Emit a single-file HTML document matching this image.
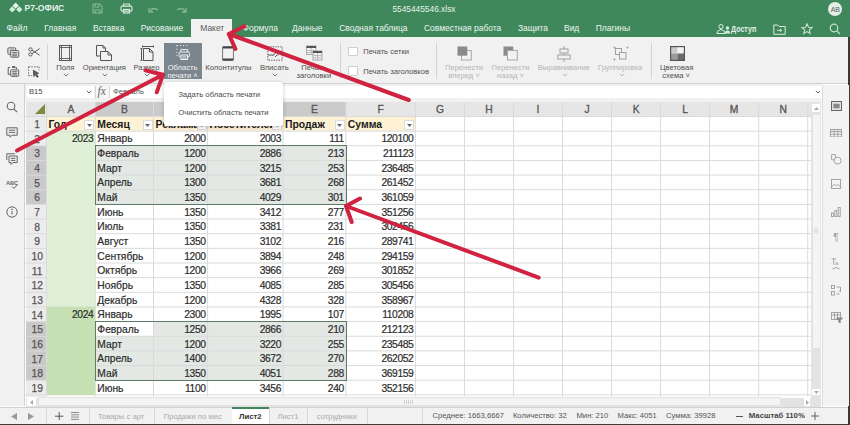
<!DOCTYPE html><html><head><meta charset="utf-8"><style>
*{margin:0;padding:0;box-sizing:border-box}
html,body{width:850px;height:425px;overflow:hidden;background:#fff;font-family:"Liberation Sans", sans-serif}
.a{position:absolute}
.t{position:absolute;white-space:nowrap;line-height:1}
</style></head><body>
<div class="a" style="left:0px;top:0px;width:850px;height:37px;background:#3e885b;"></div>
<svg class="a" style="left:0;top:0" width="30" height="16"><path d="M15.7 2.6L18.8 5.7L15.7 8.8L12.6 5.7Z" fill="#e8f5ec"/><path d="M12.2 6.300000000000001L15.299999999999999 9.4L12.2 12.5L9.1 9.4Z" fill="#cfeedb"/><path d="M19.3 6.300000000000001L22.400000000000002 9.4L19.3 12.5L16.2 9.4Z" fill="#cfeedb"/></svg>
<div class="t" style="left:24.5px;top:4.2px;font-size:8.6px;color:#e6f1ea;font-weight:bold;">Р7-ОФИС</div>
<svg class="a" style="left:92px;top:3px" width="11" height="11" viewBox="0 0 11 11" fill="none" stroke="#8fbfa0" stroke-width="1">
<path d="M1 1h7l2 2v7H1z"/><path d="M3 1v3h4V1"/><path d="M3 10V7h5v3"/></svg>
<svg class="a" style="left:119.5px;top:3px" width="13" height="11" viewBox="0 0 13 11" fill="none" stroke="#d6e9dd" stroke-width="1.2">
<path d="M3.5 3V1h6v2"/><rect x="1" y="3.2" width="11" height="5" rx="1.5"/><rect x="3.5" y="6.5" width="6" height="3.5"/></svg>
<svg class="a" style="left:148px;top:6px" width="11" height="7" viewBox="0 0 11 7" fill="none" stroke="#86b896" stroke-width="1.3">
<path d="M1.5 5.5 Q5 0.5 10 4"/><path d="M1 2v4h4"/></svg>
<svg class="a" style="left:176px;top:6px" width="11" height="7" viewBox="0 0 11 7" fill="none" stroke="#86b896" stroke-width="1.3">
<path d="M9.5 5.5 Q6 0.5 1 4"/><path d="M10 2v4H6"/></svg>
<div class="t" style="left:392.4px;top:4.6px;font-size:8.35px;color:#e6f1ea;font-weight:normal;">5545445546.xlsx</div>
<div class="a" style="left:828.2px;top:1.8px;width:14.2px;height:14.2px;border-radius:50%;background:#e3efe7"></div>
<div class="t" style="left:735.3px;width:200px;text-align:center;top:5.5px;font-size:7px;color:#5a5a5a;font-weight:normal;">AB</div>
<div class="a" style="left:191px;top:19px;width:41px;height:18.5px;background:#f1f1f1;"></div>
<div class="t" style="left:6.6px;top:23.6px;font-size:8.45px;color:#eef5f0;font-weight:normal;">Файл</div>
<div class="t" style="left:44.2px;top:23.6px;font-size:8.45px;color:#eef5f0;font-weight:normal;">Главная</div>
<div class="t" style="left:93px;top:23.6px;font-size:8.45px;color:#eef5f0;font-weight:normal;">Вставка</div>
<div class="t" style="left:140.7px;top:23.6px;font-size:8.45px;color:#eef5f0;font-weight:normal;">Рисование</div>
<div class="t" style="left:200.3px;top:23.6px;font-size:8.45px;color:#5a5a5a;font-weight:normal;">Макет</div>
<div class="t" style="left:242.6px;top:23.6px;font-size:8.45px;color:#eef5f0;font-weight:normal;">Формула</div>
<div class="t" style="left:292px;top:23.6px;font-size:8.45px;color:#eef5f0;font-weight:normal;">Данные</div>
<div class="t" style="left:339.2px;top:23.6px;font-size:8.45px;color:#eef5f0;font-weight:normal;">Сводная таблица</div>
<div class="t" style="left:424px;top:23.6px;font-size:8.45px;color:#eef5f0;font-weight:normal;">Совместная работа</div>
<div class="t" style="left:518px;top:23.6px;font-size:8.45px;color:#eef5f0;font-weight:normal;">Защита</div>
<div class="t" style="left:564px;top:23.6px;font-size:8.45px;color:#eef5f0;font-weight:normal;">Вид</div>
<div class="t" style="left:595.8px;top:23.6px;font-size:8.45px;color:#eef5f0;font-weight:normal;">Плагины</div>
<svg class="a" style="left:716px;top:23.5px" width="14" height="10" viewBox="0 0 14 10" fill="none" stroke="#dcebe1" stroke-width="1">
<circle cx="5" cy="2.6" r="2.1"/><path d="M0.8 9.5 Q1.5 5.6 5 5.6 Q8.5 5.6 9.2 9.5z"/></svg>
<svg class="a" style="left:724px;top:26px" width="7" height="8" viewBox="0 0 7 8"><circle cx="3.5" cy="2" r="1.7" fill="#dcebe1"/><path d="M0.5 7.6 Q1 4.6 3.5 4.6 Q6 4.6 6.5 7.6z" fill="#dcebe1"/></svg>
<div class="t" style="left:731.3px;top:24.6px;font-size:8.4px;color:#e6f1ea;font-weight:bold;transform:scaleX(0.85);transform-origin:0 0">Доступ</div>
<svg class="a" style="left:772.5px;top:23.5px" width="13" height="11" viewBox="0 0 13 11" fill="none" stroke="#dcebe1" stroke-width="1">
<path d="M0.8 1h4l1.2 1.5h6.2v7.8H0.8z"/><path d="M4 6.3h4.5M7 4.8l1.6 1.5L7 7.8"/></svg>
<svg class="a" style="left:801px;top:22.5px" width="12" height="12" viewBox="0 0 12 12" fill="none" stroke="#c8e4d1" stroke-width="1.1">
<path d="M6 0.8l1.5 3.4 3.6.3-2.8 2.4.9 3.6L6 8.6 2.8 10.5l.9-3.6L.9 4.5l3.6-.3z"/></svg>
<svg class="a" style="left:829px;top:22.5px" width="12" height="12" viewBox="0 0 12 12" fill="none" stroke="#c8e4d1" stroke-width="1.2">
<circle cx="5" cy="5" r="3.8"/><path d="M7.8 7.8L11 11"/></svg>
<div class="a" style="left:0px;top:37px;width:848.4px;height:47.4px;background:#f1f1f1;border-bottom:1px solid #d2d2d2"></div>
<div class="a" style="left:848.4px;top:37px;width:1.6px;height:388px;background:#3a3a3a;"></div>
<svg class="a" style="left:6.5px;top:46.5px" width="13" height="11" viewBox="0 0 13 11" fill="none" stroke="#5a5a5a" stroke-width="1">
<rect x="0.9" y="0.9" width="7.8" height="6.4" rx="0.8"/><path d="M2.5 3h4.5M2.5 5h2" stroke="#777"/><rect x="3.7" y="3.6" width="8" height="6.6" rx="0.8" fill="#f1f1f1"/><path d="M5.2 5.6h5M5.2 7.2h5M5.2 8.8h5" stroke="#666"/></svg>
<svg class="a" style="left:27.5px;top:46.5px" width="12" height="10" viewBox="0 0 12 10" fill="none" stroke="#5a5a5a" stroke-width="1">
<ellipse cx="2.5" cy="2.4" rx="1.7" ry="1.6"/><ellipse cx="2.5" cy="7.4" rx="1.7" ry="1.6"/><path d="M4 3.2L11.6 8.2M4 6.6L11.6 1.6"/></svg>
<svg class="a" style="left:6.5px;top:65.8px" width="13" height="11" viewBox="0 0 13 11" fill="none" stroke="#5a5a5a" stroke-width="1">
<path d="M3 1.5H1.2v6.8h2"/><path d="M5 1h3.2" stroke-width="1.8"/><path d="M8.4 1.5h1v1.5"/><rect x="3.7" y="3.8" width="8" height="6.5" rx="0.8" fill="#f1f1f1"/><path d="M5.2 5.7h5M5.2 7.3h5M5.2 8.9h5" stroke="#666"/></svg>
<svg class="a" style="left:28px;top:65.5px" width="12" height="12.5" viewBox="0 0 12 12.5" fill="none" stroke="#5a5a5a" stroke-width="1">
<path d="M0.6 0.8h10.5M0.6 0.8v8.8M11.1 0.8v3.5M0.6 9.6h3.5" stroke-dasharray="1.3 1.4"/><path d="M5.3 4.2l5.4 3.2-2.3.6 1.9 2.6-1 .8-1.9-2.6-1.5 1.7z" fill="#5a5a5a"/></svg>
<div class="a" style="left:47.2px;top:43.6px;width:1px;height:36px;background:#d4d4d4;"></div>
<svg class="a" style="left:0;top:0" width="200" height="80" fill="none" stroke="#555" stroke-width="1">
<rect x="59.5" y="45.5" width="12" height="15"/><path d="M61.5 45.5v15M69.5 45.5v15M59.5 47.5h12M59.5 58.5h12" stroke="#666"/></svg>
<div class="t" style="left:-34.7px;width:200px;text-align:center;top:64.2px;font-size:7.6px;color:#505050;font-weight:normal;">Поля</div>
<svg class="a" style="left:63px;top:73px" width="6" height="4" viewBox="0 0 6 4" fill="none" stroke="#777" stroke-width="1"><path d="M0.8 0.8L3 3 5.2 0.8"/></svg>
<svg class="a" style="left:0;top:0" width="200" height="80" fill="none" stroke="#555" stroke-width="1">
<path d="M96.5 45.5h6.5l2.5 2.5v3.5M96.5 45.5v10.5h3.5"/><path d="M103 45.5v2.5h2.5"/><path d="M100.5 51.5h7.5l3.5 3.5v5.5h-11z" fill="#f1f1f1"/><path d="M108 51.5v3.5h3.5"/></svg>
<div class="t" style="left:4.299999999999997px;width:200px;text-align:center;top:64.2px;font-size:7.6px;color:#505050;font-weight:normal;">Ориентация</div>
<svg class="a" style="left:101.5px;top:73px" width="6" height="4" viewBox="0 0 6 4" fill="none" stroke="#777" stroke-width="1"><path d="M0.8 0.8L3 3 5.2 0.8"/></svg>
<svg class="a" style="left:0;top:0" width="200" height="80" fill="none" stroke="#555" stroke-width="1">
<path d="M143 46.5h10M142.5 45.5v2M153.5 45.5v2M141.5 48.5v12M140.5 48.5h2M140.5 60.5h2"/><path d="M143.5 48.5h6l3.5 3.5v8.5h-9.5z"/><path d="M149.5 48.5v3.5h3.5"/></svg>
<div class="t" style="left:46.5px;width:200px;text-align:center;top:64.2px;font-size:7.6px;color:#505050;font-weight:normal;">Размер</div>
<svg class="a" style="left:144px;top:73px" width="6" height="4" viewBox="0 0 6 4" fill="none" stroke="#777" stroke-width="1"><path d="M0.8 0.8L3 3 5.2 0.8"/></svg>
<div class="a" style="left:163.5px;top:43px;width:38.3px;height:36px;background:#7b858d;"></div>
<svg class="a" style="left:175px;top:44px" width="16" height="17" viewBox="0 0 16 17" fill="none" stroke="#eef0f2" stroke-width="1">
<path d="M1.8 1.5v11M1.8 1.5h11" stroke-dasharray="1 2.2"/><path d="M5.8 8V5.6h7v2.4"/><rect x="4" y="8" width="10.5" height="5" rx="1.5"/><rect x="6" y="11" width="6.5" height="4.5" fill="#7b858d"/><path d="M7.2 12.8h4.2M7.2 14.3h4.2" stroke-width="0.8"/></svg>
<div class="t" style="left:82.6px;width:200px;text-align:center;top:64.2px;font-size:7.6px;color:#f3f4f5;font-weight:normal;">Область</div>
<div class="t" style="left:82.6px;width:200px;text-align:center;top:71.8px;font-size:7.6px;color:#f3f4f5;font-weight:normal;">печати ˄</div>
<svg class="a" style="left:222.3px;top:45.8px" width="12" height="15" viewBox="0 0 12 15" fill="none" stroke="#555" stroke-width="1">
<rect x="0.6" y="0.6" width="10.8" height="13.8" rx="0.8" stroke="#777"/><path d="M0.6 1.6h10.8M0.6 13.4h10.8" stroke-width="2" stroke="#444"/></svg>
<div class="t" style="left:128.4px;width:200px;text-align:center;top:64.2px;font-size:7.6px;color:#505050;font-weight:normal;">Колонтитулы</div>
<svg class="a" style="left:266.5px;top:45.5px" width="16" height="15" viewBox="0 0 16 15" fill="none" stroke="#555" stroke-width="1">
<rect x="0.8" y="0.8" width="14.4" height="13.4" stroke-dasharray="1.3 1.2"/><path d="M0.8 9h6M6 4.5h5v5" /><path d="M6 9.5L11 4.5M8 11l2-2"/></svg>
<div class="t" style="left:174.3px;width:200px;text-align:center;top:64.2px;font-size:7.6px;color:#505050;font-weight:normal;">Вписать</div>
<svg class="a" style="left:271.8px;top:73px" width="6" height="4" viewBox="0 0 6 4" fill="none" stroke="#777" stroke-width="1"><path d="M0.8 0.8L3 3 5.2 0.8"/></svg>
<svg class="a" style="left:0;top:0" width="340" height="80" fill="none" stroke-width="1">
<rect x="306.5" y="46" width="9.5" height="8.5" stroke="#aaa"/><path d="M306.5 47h9.5" stroke="#555" stroke-width="2"/><path d="M306.5 50.5h9.5M306.5 52.5h9.5M311.2 48v6.5" stroke="#bbb"/>
<rect x="313" y="51" width="9" height="9" fill="#f1f1f1" stroke="#aaa"/><path d="M313 52h9" stroke="#555" stroke-width="2"/><path d="M313 55.5h9M313 57.7h9M317.5 53v7" stroke="#bbb"/></svg>
<div class="t" style="left:213.8px;width:200px;text-align:center;top:64.2px;font-size:7.6px;color:#505050;font-weight:normal;">Печать</div>
<div class="t" style="left:213.8px;width:200px;text-align:center;top:71.8px;font-size:7.6px;color:#505050;font-weight:normal;">заголовки</div>
<div class="a" style="left:340.2px;top:43px;width:1px;height:35.5px;background:#d4d4d4;"></div>
<div class="a" style="left:348.4px;top:47.3px;width:9.2px;height:9.2px;background:#fff;border:1px solid #cfcfcf;border-radius:1px"></div>
<div class="a" style="left:348.4px;top:66.4px;width:9.2px;height:9.2px;background:#fff;border:1px solid #cfcfcf;border-radius:1px"></div>
<div class="t" style="left:363.2px;top:48.0px;font-size:7.6px;color:#505050;font-weight:normal;">Печать сетки</div>
<div class="t" style="left:363.2px;top:67.5px;font-size:7.6px;color:#505050;font-weight:normal;">Печать заголовков</div>
<div class="a" style="left:436.2px;top:43px;width:1px;height:35.5px;background:#d4d4d4;"></div>
<svg class="a" style="left:457px;top:45.5px" width="15" height="15" viewBox="0 0 15 15">
<rect x="4.5" y="4.5" width="9.8" height="9.5" fill="none" stroke="#a8a8a8" stroke-width="1"/><rect x="0.5" y="0.5" width="9.8" height="9.2" fill="#8a8a8a"/></svg>
<div class="t" style="left:364px;width:200px;text-align:center;top:64px;font-size:7.6px;color:#b5b5b5;font-weight:normal;">Перенести</div>
<div class="t" style="left:364px;width:200px;text-align:center;top:71.6px;font-size:7.6px;color:#b5b5b5;font-weight:normal;">вперед ˅</div>
<svg class="a" style="left:503px;top:45.5px" width="15" height="15" viewBox="0 0 15 15">
<rect x="0.5" y="0.5" width="9.8" height="9.2" fill="#8a8a8a"/><rect x="4.5" y="4.5" width="9.8" height="9.5" fill="#f1f1f1" stroke="#a8a8a8" stroke-width="1"/></svg>
<div class="t" style="left:410.5px;width:200px;text-align:center;top:64px;font-size:7.6px;color:#b5b5b5;font-weight:normal;">Перенести</div>
<div class="t" style="left:410.5px;width:200px;text-align:center;top:71.6px;font-size:7.6px;color:#b5b5b5;font-weight:normal;">назад ˅</div>
<svg class="a" style="left:557px;top:45.5px" width="14" height="16" viewBox="0 0 14 16" fill="none" stroke="#a0a0a0" stroke-width="1">
<path d="M7 0v16"/><rect x="3" y="3" width="8" height="4" fill="#f1f1f1"/><rect x="0.8" y="9" width="12.4" height="4" fill="#f1f1f1"/></svg>
<div class="t" style="left:463.79999999999995px;width:200px;text-align:center;top:64px;font-size:7.6px;color:#b5b5b5;font-weight:normal;">Выравнивание</div>
<svg class="a" style="left:561.5px;top:73px" width="6" height="4" viewBox="0 0 6 4" fill="none" stroke="#bbb" stroke-width="1"><path d="M0.8 0.8L3 3 5.2 0.8"/></svg>
<svg class="a" style="left:613px;top:45.5px" width="16" height="15" viewBox="0 0 16 15" fill="none" stroke="#a0a0a0" stroke-width="1">
<rect x="2.5" y="2.5" width="6" height="6"/><rect x="6.5" y="6.5" width="6.5" height="6.5" fill="#f1f1f1"/><circle cx="1.5" cy="1.5" r=".6" fill="#a0a0a0"/><circle cx="14.5" cy="1.5" r=".6" fill="#a0a0a0"/><circle cx="1.5" cy="13.5" r=".6" fill="#a0a0a0"/></svg>
<div class="t" style="left:520.2px;width:200px;text-align:center;top:64px;font-size:7.6px;color:#b5b5b5;font-weight:normal;">Группировка</div>
<svg class="a" style="left:618.5px;top:73px" width="6" height="4" viewBox="0 0 6 4" fill="none" stroke="#bbb" stroke-width="1"><path d="M0.8 0.8L3 3 5.2 0.8"/></svg>
<div class="a" style="left:651px;top:43px;width:1px;height:35.5px;background:#d4d4d4;"></div>
<svg class="a" style="left:669.5px;top:45.5px" width="15" height="15" viewBox="0 0 15 15">
<rect x="1" y="1" width="6.5" height="6.5" fill="#c9c9c9"/><rect x="7.5" y="1" width="6.5" height="6.5" fill="#f3f3f3"/><rect x="1" y="7.5" width="6.5" height="6.5" fill="#9b9b9b"/><rect x="7.5" y="7.5" width="6.5" height="6.5" fill="#6b6b6b"/><rect x="0.6" y="0.6" width="13.8" height="13.8" fill="none" stroke="#555" stroke-width="1.2"/></svg>
<div class="t" style="left:576.6px;width:200px;text-align:center;top:64px;font-size:7.6px;color:#505050;font-weight:normal;">Цветовая</div>
<div class="t" style="left:576.2px;width:200px;text-align:center;top:71.6px;font-size:7.6px;color:#505050;font-weight:normal;">схема ˅</div>
<div class="a" style="left:0px;top:84.4px;width:25.2px;height:322px;background:#f1f1f1;border-right:1px solid #d0d0d0"></div>
<svg class="a" style="left:6px;top:100.5px" width="12" height="12" viewBox="0 0 12 12" fill="none" stroke="#666" stroke-width="1.1"><circle cx="5" cy="5" r="3.8"/><path d="M7.8 7.8L11 11"/></svg>
<svg class="a" style="left:6px;top:126.5px" width="12" height="12" viewBox="0 0 12 12" fill="none" stroke="#666" stroke-width="1"><path d="M0.8 0.8h10.4v7.4H6l-2 2v-2H0.8z"/><path d="M2.8 3.2h6.4M2.8 5.4h6.4"/></svg>
<svg class="a" style="left:6px;top:152.5px" width="12" height="12" viewBox="0 0 12 12" fill="none" stroke="#666" stroke-width="1"><path d="M0.8 7V0.8h8"/><path d="M3 3h8.2v6.5H7l-2 2v-2H3z"/><path d="M4.8 5.3h4.6M4.8 7.4h4.6"/></svg>
<svg class="a" style="left:5.5px;top:178px" width="13" height="12" viewBox="0 0 13 12"><text x="0" y="6.5" font-size="5.6" font-weight="bold" font-family="Liberation Sans" fill="#666">ABC</text><path d="M6 8.5l2 2 3.5-4" fill="none" stroke="#666" stroke-width="1"/></svg>
<svg class="a" style="left:6px;top:206px" width="12" height="12" viewBox="0 0 12 12" fill="none" stroke="#666" stroke-width="1"><circle cx="6" cy="6" r="5.2"/><path d="M6 5v3.5"/><circle cx="6" cy="3.3" r=".4" fill="#666"/></svg>
<div class="a" style="left:25.2px;top:84.4px;width:796.6px;height:17.6px;background:#f1f1f1;"></div>
<div class="a" style="left:26.7px;top:86px;width:67.5px;height:12px;background:#fff;"></div>
<div class="t" style="left:29px;top:87.8px;font-size:7.6px;color:#444;font-weight:normal;">B15</div>
<svg class="a" style="left:85.5px;top:90px" width="6" height="4" viewBox="0 0 6 4" fill="none" stroke="#666" stroke-width="1"><path d="M0.8 0.8L3 3 5.2 0.8"/></svg>
<div class="a" style="left:94.7px;top:85.5px;width:15.6px;height:12.5px;background:#f8f8f8;border-left:1px solid #d6d6d6;border-right:1px solid #d6d6d6"></div>
<div class="t" style="left:97.6px;top:86.2px;font-family:'Liberation Serif',serif;font-style:italic;font-size:11.5px;color:#666">fx</div>
<div class="a" style="left:110px;top:86px;width:711.5px;height:12px;background:#fff;"></div>
<div class="t" style="left:113px;top:87.8px;font-size:7.6px;color:#555;font-weight:normal;">Февраль</div>
<svg class="a" style="left:815px;top:90px" width="6" height="4" viewBox="0 0 6 4" fill="none" stroke="#666" stroke-width="1"><path d="M0.8 0.8L3 3 5.2 0.8"/></svg>
<div class="a" style="left:25.5px;top:102.0px;width:785.8px;height:14.5px;background:#e6e6e6;"></div>
<div class="a" style="left:95.3px;top:102.0px;width:250.5px;height:14.5px;background:#cacaca;"></div>
<div class="a" style="left:25.5px;top:116.5px;width:21px;height:280.0px;background:#ececec;"></div>
<div class="a" style="left:25.5px;top:145.8px;width:21px;height:14.65px;background:#c9c9c9;"></div>
<div class="a" style="left:25.5px;top:160.45px;width:21px;height:14.65px;background:#c9c9c9;"></div>
<div class="a" style="left:25.5px;top:175.1px;width:21px;height:14.65px;background:#c9c9c9;"></div>
<div class="a" style="left:25.5px;top:189.75px;width:21px;height:14.65px;background:#c9c9c9;"></div>
<div class="a" style="left:25.5px;top:321.6px;width:21px;height:14.65px;background:#c9c9c9;"></div>
<div class="a" style="left:25.5px;top:336.25px;width:21px;height:14.65px;background:#c9c9c9;"></div>
<div class="a" style="left:25.5px;top:350.9px;width:21px;height:14.65px;background:#c9c9c9;"></div>
<div class="a" style="left:25.5px;top:365.55px;width:21px;height:14.65px;background:#c9c9c9;"></div>
<svg class="a" style="left:35px;top:104px" width="10" height="10" viewBox="0 0 10 10"><path d="M10 0V10H0z" fill="#7d8c3a"/></svg>
<div class="a" style="left:46.5px;top:116.5px;width:368.9px;height:14.65px;background:#fdf2d3;"></div>
<div class="a" style="left:46.5px;top:131.15px;width:48.8px;height:175.8px;background:#dff0d6;"></div>
<div class="a" style="left:46.5px;top:306.95000000000005px;width:48.8px;height:87.9px;background:#c5e1b3;"></div>
<div class="a" style="left:95.3px;top:145.8px;width:250.5px;height:58.6px;background:#e3e8e5;"></div>
<div class="a" style="left:95.3px;top:321.6px;width:250.5px;height:58.6px;background:#e3e8e5;"></div>
<div class="a" style="left:95.3px;top:321.6px;width:58.2px;height:14.65px;background:#fff;"></div>
<svg class="a" style="left:0;top:0" width="850" height="425"><g stroke="#dadada" stroke-width="1" fill="none"><path d="M95.3 102.0V396.5" /><path d="M153.5 102.0V396.5" /><path d="M207.6 102.0V396.5" /><path d="M283.0 102.0V396.5" /><path d="M345.8 102.0V396.5" /><path d="M415.4 102.0V396.5" /><path d="M464.44 102.0V396.5" /><path d="M513.48 102.0V396.5" /><path d="M562.52 102.0V396.5" /><path d="M611.56 102.0V396.5" /><path d="M660.5999999999999 102.0V396.5" /><path d="M709.6399999999999 102.0V396.5" /><path d="M758.6799999999998 102.0V396.5" /><path d="M807.7199999999998 102.0V396.5" /><path d="M46.5 102.0V396.5" /><path d="M25.5 116.5H811.3" /><path d="M25.5 131.15H811.3" /><path d="M25.5 145.8H811.3" /><path d="M25.5 160.45H811.3" /><path d="M25.5 175.1H811.3" /><path d="M25.5 189.75H811.3" /><path d="M25.5 204.4H811.3" /><path d="M25.5 219.05H811.3" /><path d="M25.5 233.7H811.3" /><path d="M25.5 248.35H811.3" /><path d="M25.5 263.0H811.3" /><path d="M25.5 277.65H811.3" /><path d="M25.5 292.3H811.3" /><path d="M25.5 306.95000000000005H811.3" /><path d="M25.5 321.6H811.3" /><path d="M25.5 336.25H811.3" /><path d="M25.5 350.9H811.3" /><path d="M25.5 365.55H811.3" /><path d="M25.5 380.2H811.3" /><path d="M25.5 394.85H811.3" /></g></svg>
<div class="a" style="left:47px;top:131.65px;width:47.8px;height:174.8px;background:#dff0d6;"></div>
<div class="a" style="left:47px;top:307.45000000000005px;width:47.8px;height:87.4px;background:#c5e1b3;"></div>
<div class="t" style="left:-29.099999999999994px;width:200px;text-align:center;top:105.3px;font-size:10.3px;color:#555;font-weight:normal;-webkit-text-stroke:0.3px #555">A</div>
<div class="t" style="left:24.400000000000006px;width:200px;text-align:center;top:105.3px;font-size:10.3px;color:#555;font-weight:normal;-webkit-text-stroke:0.3px #555">B</div>
<div class="t" style="left:80.55000000000001px;width:200px;text-align:center;top:105.3px;font-size:10.3px;color:#555;font-weight:normal;-webkit-text-stroke:0.3px #555">C</div>
<div class="t" style="left:145.3px;width:200px;text-align:center;top:105.3px;font-size:10.3px;color:#555;font-weight:normal;-webkit-text-stroke:0.3px #555">D</div>
<div class="t" style="left:214.39999999999998px;width:200px;text-align:center;top:105.3px;font-size:10.3px;color:#555;font-weight:normal;-webkit-text-stroke:0.3px #555">E</div>
<div class="t" style="left:280.6px;width:200px;text-align:center;top:105.3px;font-size:10.3px;color:#555;font-weight:normal;-webkit-text-stroke:0.3px #555">F</div>
<div class="t" style="left:339.91999999999996px;width:200px;text-align:center;top:105.3px;font-size:10.3px;color:#555;font-weight:normal;-webkit-text-stroke:0.3px #555">G</div>
<div class="t" style="left:388.96000000000004px;width:200px;text-align:center;top:105.3px;font-size:10.3px;color:#555;font-weight:normal;-webkit-text-stroke:0.3px #555">H</div>
<div class="t" style="left:438.0px;width:200px;text-align:center;top:105.3px;font-size:10.3px;color:#555;font-weight:normal;-webkit-text-stroke:0.3px #555">I</div>
<div class="t" style="left:487.03999999999996px;width:200px;text-align:center;top:105.3px;font-size:10.3px;color:#555;font-weight:normal;-webkit-text-stroke:0.3px #555">J</div>
<div class="t" style="left:536.0799999999999px;width:200px;text-align:center;top:105.3px;font-size:10.3px;color:#555;font-weight:normal;-webkit-text-stroke:0.3px #555">K</div>
<div class="t" style="left:585.1199999999999px;width:200px;text-align:center;top:105.3px;font-size:10.3px;color:#555;font-weight:normal;-webkit-text-stroke:0.3px #555">L</div>
<div class="t" style="left:634.1599999999999px;width:200px;text-align:center;top:105.3px;font-size:10.3px;color:#555;font-weight:normal;-webkit-text-stroke:0.3px #555">M</div>
<div class="t" style="left:683.1999999999998px;width:200px;text-align:center;top:105.3px;font-size:10.3px;color:#555;font-weight:normal;-webkit-text-stroke:0.3px #555">N</div>
<div class="t" style="left:-62.8px;width:200px;text-align:center;top:120.1px;font-size:10.3px;color:#555;font-weight:normal;-webkit-text-stroke:0.25px #555">1</div>
<div class="t" style="left:-62.8px;width:200px;text-align:center;top:134.75px;font-size:10.3px;color:#555;font-weight:normal;-webkit-text-stroke:0.25px #555">2</div>
<div class="t" style="left:-62.8px;width:200px;text-align:center;top:149.4px;font-size:10.3px;color:#555;font-weight:normal;-webkit-text-stroke:0.25px #555">3</div>
<div class="t" style="left:-62.8px;width:200px;text-align:center;top:164.04999999999998px;font-size:10.3px;color:#555;font-weight:normal;-webkit-text-stroke:0.25px #555">4</div>
<div class="t" style="left:-62.8px;width:200px;text-align:center;top:178.7px;font-size:10.3px;color:#555;font-weight:normal;-webkit-text-stroke:0.25px #555">5</div>
<div class="t" style="left:-62.8px;width:200px;text-align:center;top:193.35px;font-size:10.3px;color:#555;font-weight:normal;-webkit-text-stroke:0.25px #555">6</div>
<div class="t" style="left:-62.8px;width:200px;text-align:center;top:208.0px;font-size:10.3px;color:#555;font-weight:normal;-webkit-text-stroke:0.25px #555">7</div>
<div class="t" style="left:-62.8px;width:200px;text-align:center;top:222.65px;font-size:10.3px;color:#555;font-weight:normal;-webkit-text-stroke:0.25px #555">8</div>
<div class="t" style="left:-62.8px;width:200px;text-align:center;top:237.29999999999998px;font-size:10.3px;color:#555;font-weight:normal;-webkit-text-stroke:0.25px #555">9</div>
<div class="t" style="left:-62.8px;width:200px;text-align:center;top:251.95px;font-size:10.3px;color:#555;font-weight:normal;-webkit-text-stroke:0.25px #555">10</div>
<div class="t" style="left:-62.8px;width:200px;text-align:center;top:266.6px;font-size:10.3px;color:#555;font-weight:normal;-webkit-text-stroke:0.25px #555">11</div>
<div class="t" style="left:-62.8px;width:200px;text-align:center;top:281.25px;font-size:10.3px;color:#555;font-weight:normal;-webkit-text-stroke:0.25px #555">12</div>
<div class="t" style="left:-62.8px;width:200px;text-align:center;top:295.90000000000003px;font-size:10.3px;color:#555;font-weight:normal;-webkit-text-stroke:0.25px #555">13</div>
<div class="t" style="left:-62.8px;width:200px;text-align:center;top:310.55000000000007px;font-size:10.3px;color:#555;font-weight:normal;-webkit-text-stroke:0.25px #555">14</div>
<div class="t" style="left:-62.8px;width:200px;text-align:center;top:325.20000000000005px;font-size:10.3px;color:#555;font-weight:normal;-webkit-text-stroke:0.25px #555">15</div>
<div class="t" style="left:-62.8px;width:200px;text-align:center;top:339.85px;font-size:10.3px;color:#555;font-weight:normal;-webkit-text-stroke:0.25px #555">16</div>
<div class="t" style="left:-62.8px;width:200px;text-align:center;top:354.5px;font-size:10.3px;color:#555;font-weight:normal;-webkit-text-stroke:0.25px #555">17</div>
<div class="t" style="left:-62.8px;width:200px;text-align:center;top:369.15000000000003px;font-size:10.3px;color:#555;font-weight:normal;-webkit-text-stroke:0.25px #555">18</div>
<div class="t" style="left:-62.8px;width:200px;text-align:center;top:383.8px;font-size:10.3px;color:#555;font-weight:normal;-webkit-text-stroke:0.25px #555">19</div>
<div class="t" style="left:48.5px;top:119.8px;font-size:10.4px;color:#1a1a1a;font-weight:bold;">Год</div>
<div class="t" style="left:97.3px;top:119.8px;font-size:10.4px;color:#1a1a1a;font-weight:bold;">Месяц</div>
<div class="t" style="left:155.5px;top:119.8px;font-size:10.4px;color:#1a1a1a;font-weight:bold;">Реклама</div>
<div class="t" style="left:209.6px;top:119.8px;font-size:10.4px;color:#1a1a1a;font-weight:bold;">Посетителей</div>
<div class="t" style="left:285.0px;top:119.8px;font-size:10.4px;color:#1a1a1a;font-weight:bold;">Продаж</div>
<div class="t" style="left:347.8px;top:119.8px;font-size:10.4px;color:#1a1a1a;font-weight:bold;">Сумма</div>
<div class="t" style="left:-106.7px;width:200px;text-align:right;top:134.45000000000002px;font-size:10.3px;color:#2a2a2a;font-weight:normal;letter-spacing:-0.4px;-webkit-text-stroke:0.2px #333">2023</div>
<div class="t" style="left:97.3px;top:134.45000000000002px;font-size:10.3px;color:#2a2a2a;font-weight:normal;-webkit-text-stroke:0.2px #333">Январь</div>
<div class="t" style="left:5.599999999999994px;width:200px;text-align:right;top:134.45000000000002px;font-size:10.3px;color:#2a2a2a;font-weight:normal;letter-spacing:-0.4px;-webkit-text-stroke:0.2px #333">2000</div>
<div class="t" style="left:81.0px;width:200px;text-align:right;top:134.45000000000002px;font-size:10.3px;color:#2a2a2a;font-weight:normal;letter-spacing:-0.4px;-webkit-text-stroke:0.2px #333">2003</div>
<div class="t" style="left:143.8px;width:200px;text-align:right;top:134.45000000000002px;font-size:10.3px;color:#2a2a2a;font-weight:normal;letter-spacing:-0.4px;-webkit-text-stroke:0.2px #333">111</div>
<div class="t" style="left:213.39999999999998px;width:200px;text-align:right;top:134.45000000000002px;font-size:10.3px;color:#2a2a2a;font-weight:normal;letter-spacing:-0.4px;-webkit-text-stroke:0.2px #333">120100</div>
<div class="t" style="left:97.3px;top:149.10000000000002px;font-size:10.3px;color:#2a2a2a;font-weight:normal;-webkit-text-stroke:0.2px #333">Февраль</div>
<div class="t" style="left:5.599999999999994px;width:200px;text-align:right;top:149.10000000000002px;font-size:10.3px;color:#2a2a2a;font-weight:normal;letter-spacing:-0.4px;-webkit-text-stroke:0.2px #333">1200</div>
<div class="t" style="left:81.0px;width:200px;text-align:right;top:149.10000000000002px;font-size:10.3px;color:#2a2a2a;font-weight:normal;letter-spacing:-0.4px;-webkit-text-stroke:0.2px #333">2886</div>
<div class="t" style="left:143.8px;width:200px;text-align:right;top:149.10000000000002px;font-size:10.3px;color:#2a2a2a;font-weight:normal;letter-spacing:-0.4px;-webkit-text-stroke:0.2px #333">213</div>
<div class="t" style="left:213.39999999999998px;width:200px;text-align:right;top:149.10000000000002px;font-size:10.3px;color:#2a2a2a;font-weight:normal;letter-spacing:-0.4px;-webkit-text-stroke:0.2px #333">211123</div>
<div class="t" style="left:97.3px;top:163.75px;font-size:10.3px;color:#2a2a2a;font-weight:normal;-webkit-text-stroke:0.2px #333">Март</div>
<div class="t" style="left:5.599999999999994px;width:200px;text-align:right;top:163.75px;font-size:10.3px;color:#2a2a2a;font-weight:normal;letter-spacing:-0.4px;-webkit-text-stroke:0.2px #333">1200</div>
<div class="t" style="left:81.0px;width:200px;text-align:right;top:163.75px;font-size:10.3px;color:#2a2a2a;font-weight:normal;letter-spacing:-0.4px;-webkit-text-stroke:0.2px #333">3215</div>
<div class="t" style="left:143.8px;width:200px;text-align:right;top:163.75px;font-size:10.3px;color:#2a2a2a;font-weight:normal;letter-spacing:-0.4px;-webkit-text-stroke:0.2px #333">253</div>
<div class="t" style="left:213.39999999999998px;width:200px;text-align:right;top:163.75px;font-size:10.3px;color:#2a2a2a;font-weight:normal;letter-spacing:-0.4px;-webkit-text-stroke:0.2px #333">236485</div>
<div class="t" style="left:97.3px;top:178.4px;font-size:10.3px;color:#2a2a2a;font-weight:normal;-webkit-text-stroke:0.2px #333">Апрель</div>
<div class="t" style="left:5.599999999999994px;width:200px;text-align:right;top:178.4px;font-size:10.3px;color:#2a2a2a;font-weight:normal;letter-spacing:-0.4px;-webkit-text-stroke:0.2px #333">1300</div>
<div class="t" style="left:81.0px;width:200px;text-align:right;top:178.4px;font-size:10.3px;color:#2a2a2a;font-weight:normal;letter-spacing:-0.4px;-webkit-text-stroke:0.2px #333">3681</div>
<div class="t" style="left:143.8px;width:200px;text-align:right;top:178.4px;font-size:10.3px;color:#2a2a2a;font-weight:normal;letter-spacing:-0.4px;-webkit-text-stroke:0.2px #333">268</div>
<div class="t" style="left:213.39999999999998px;width:200px;text-align:right;top:178.4px;font-size:10.3px;color:#2a2a2a;font-weight:normal;letter-spacing:-0.4px;-webkit-text-stroke:0.2px #333">261452</div>
<div class="t" style="left:97.3px;top:193.05px;font-size:10.3px;color:#2a2a2a;font-weight:normal;-webkit-text-stroke:0.2px #333">Май</div>
<div class="t" style="left:5.599999999999994px;width:200px;text-align:right;top:193.05px;font-size:10.3px;color:#2a2a2a;font-weight:normal;letter-spacing:-0.4px;-webkit-text-stroke:0.2px #333">1350</div>
<div class="t" style="left:81.0px;width:200px;text-align:right;top:193.05px;font-size:10.3px;color:#2a2a2a;font-weight:normal;letter-spacing:-0.4px;-webkit-text-stroke:0.2px #333">4029</div>
<div class="t" style="left:143.8px;width:200px;text-align:right;top:193.05px;font-size:10.3px;color:#2a2a2a;font-weight:normal;letter-spacing:-0.4px;-webkit-text-stroke:0.2px #333">301</div>
<div class="t" style="left:213.39999999999998px;width:200px;text-align:right;top:193.05px;font-size:10.3px;color:#2a2a2a;font-weight:normal;letter-spacing:-0.4px;-webkit-text-stroke:0.2px #333">361059</div>
<div class="t" style="left:97.3px;top:207.70000000000002px;font-size:10.3px;color:#2a2a2a;font-weight:normal;-webkit-text-stroke:0.2px #333">Июнь</div>
<div class="t" style="left:5.599999999999994px;width:200px;text-align:right;top:207.70000000000002px;font-size:10.3px;color:#2a2a2a;font-weight:normal;letter-spacing:-0.4px;-webkit-text-stroke:0.2px #333">1350</div>
<div class="t" style="left:81.0px;width:200px;text-align:right;top:207.70000000000002px;font-size:10.3px;color:#2a2a2a;font-weight:normal;letter-spacing:-0.4px;-webkit-text-stroke:0.2px #333">3412</div>
<div class="t" style="left:143.8px;width:200px;text-align:right;top:207.70000000000002px;font-size:10.3px;color:#2a2a2a;font-weight:normal;letter-spacing:-0.4px;-webkit-text-stroke:0.2px #333">277</div>
<div class="t" style="left:213.39999999999998px;width:200px;text-align:right;top:207.70000000000002px;font-size:10.3px;color:#2a2a2a;font-weight:normal;letter-spacing:-0.4px;-webkit-text-stroke:0.2px #333">351256</div>
<div class="t" style="left:97.3px;top:222.35000000000002px;font-size:10.3px;color:#2a2a2a;font-weight:normal;-webkit-text-stroke:0.2px #333">Июль</div>
<div class="t" style="left:5.599999999999994px;width:200px;text-align:right;top:222.35000000000002px;font-size:10.3px;color:#2a2a2a;font-weight:normal;letter-spacing:-0.4px;-webkit-text-stroke:0.2px #333">1350</div>
<div class="t" style="left:81.0px;width:200px;text-align:right;top:222.35000000000002px;font-size:10.3px;color:#2a2a2a;font-weight:normal;letter-spacing:-0.4px;-webkit-text-stroke:0.2px #333">3381</div>
<div class="t" style="left:143.8px;width:200px;text-align:right;top:222.35000000000002px;font-size:10.3px;color:#2a2a2a;font-weight:normal;letter-spacing:-0.4px;-webkit-text-stroke:0.2px #333">231</div>
<div class="t" style="left:213.39999999999998px;width:200px;text-align:right;top:222.35000000000002px;font-size:10.3px;color:#2a2a2a;font-weight:normal;letter-spacing:-0.4px;-webkit-text-stroke:0.2px #333">302456</div>
<div class="t" style="left:97.3px;top:237.0px;font-size:10.3px;color:#2a2a2a;font-weight:normal;-webkit-text-stroke:0.2px #333">Август</div>
<div class="t" style="left:5.599999999999994px;width:200px;text-align:right;top:237.0px;font-size:10.3px;color:#2a2a2a;font-weight:normal;letter-spacing:-0.4px;-webkit-text-stroke:0.2px #333">1350</div>
<div class="t" style="left:81.0px;width:200px;text-align:right;top:237.0px;font-size:10.3px;color:#2a2a2a;font-weight:normal;letter-spacing:-0.4px;-webkit-text-stroke:0.2px #333">3102</div>
<div class="t" style="left:143.8px;width:200px;text-align:right;top:237.0px;font-size:10.3px;color:#2a2a2a;font-weight:normal;letter-spacing:-0.4px;-webkit-text-stroke:0.2px #333">216</div>
<div class="t" style="left:213.39999999999998px;width:200px;text-align:right;top:237.0px;font-size:10.3px;color:#2a2a2a;font-weight:normal;letter-spacing:-0.4px;-webkit-text-stroke:0.2px #333">289741</div>
<div class="t" style="left:97.3px;top:251.65px;font-size:10.3px;color:#2a2a2a;font-weight:normal;-webkit-text-stroke:0.2px #333">Сентябрь</div>
<div class="t" style="left:5.599999999999994px;width:200px;text-align:right;top:251.65px;font-size:10.3px;color:#2a2a2a;font-weight:normal;letter-spacing:-0.4px;-webkit-text-stroke:0.2px #333">1200</div>
<div class="t" style="left:81.0px;width:200px;text-align:right;top:251.65px;font-size:10.3px;color:#2a2a2a;font-weight:normal;letter-spacing:-0.4px;-webkit-text-stroke:0.2px #333">3894</div>
<div class="t" style="left:143.8px;width:200px;text-align:right;top:251.65px;font-size:10.3px;color:#2a2a2a;font-weight:normal;letter-spacing:-0.4px;-webkit-text-stroke:0.2px #333">248</div>
<div class="t" style="left:213.39999999999998px;width:200px;text-align:right;top:251.65px;font-size:10.3px;color:#2a2a2a;font-weight:normal;letter-spacing:-0.4px;-webkit-text-stroke:0.2px #333">294159</div>
<div class="t" style="left:97.3px;top:266.3px;font-size:10.3px;color:#2a2a2a;font-weight:normal;-webkit-text-stroke:0.2px #333">Октябрь</div>
<div class="t" style="left:5.599999999999994px;width:200px;text-align:right;top:266.3px;font-size:10.3px;color:#2a2a2a;font-weight:normal;letter-spacing:-0.4px;-webkit-text-stroke:0.2px #333">1200</div>
<div class="t" style="left:81.0px;width:200px;text-align:right;top:266.3px;font-size:10.3px;color:#2a2a2a;font-weight:normal;letter-spacing:-0.4px;-webkit-text-stroke:0.2px #333">3966</div>
<div class="t" style="left:143.8px;width:200px;text-align:right;top:266.3px;font-size:10.3px;color:#2a2a2a;font-weight:normal;letter-spacing:-0.4px;-webkit-text-stroke:0.2px #333">269</div>
<div class="t" style="left:213.39999999999998px;width:200px;text-align:right;top:266.3px;font-size:10.3px;color:#2a2a2a;font-weight:normal;letter-spacing:-0.4px;-webkit-text-stroke:0.2px #333">301852</div>
<div class="t" style="left:97.3px;top:280.95px;font-size:10.3px;color:#2a2a2a;font-weight:normal;-webkit-text-stroke:0.2px #333">Ноябрь</div>
<div class="t" style="left:5.599999999999994px;width:200px;text-align:right;top:280.95px;font-size:10.3px;color:#2a2a2a;font-weight:normal;letter-spacing:-0.4px;-webkit-text-stroke:0.2px #333">1350</div>
<div class="t" style="left:81.0px;width:200px;text-align:right;top:280.95px;font-size:10.3px;color:#2a2a2a;font-weight:normal;letter-spacing:-0.4px;-webkit-text-stroke:0.2px #333">4085</div>
<div class="t" style="left:143.8px;width:200px;text-align:right;top:280.95px;font-size:10.3px;color:#2a2a2a;font-weight:normal;letter-spacing:-0.4px;-webkit-text-stroke:0.2px #333">285</div>
<div class="t" style="left:213.39999999999998px;width:200px;text-align:right;top:280.95px;font-size:10.3px;color:#2a2a2a;font-weight:normal;letter-spacing:-0.4px;-webkit-text-stroke:0.2px #333">305456</div>
<div class="t" style="left:97.3px;top:295.6px;font-size:10.3px;color:#2a2a2a;font-weight:normal;-webkit-text-stroke:0.2px #333">Декабрь</div>
<div class="t" style="left:5.599999999999994px;width:200px;text-align:right;top:295.6px;font-size:10.3px;color:#2a2a2a;font-weight:normal;letter-spacing:-0.4px;-webkit-text-stroke:0.2px #333">1200</div>
<div class="t" style="left:81.0px;width:200px;text-align:right;top:295.6px;font-size:10.3px;color:#2a2a2a;font-weight:normal;letter-spacing:-0.4px;-webkit-text-stroke:0.2px #333">4328</div>
<div class="t" style="left:143.8px;width:200px;text-align:right;top:295.6px;font-size:10.3px;color:#2a2a2a;font-weight:normal;letter-spacing:-0.4px;-webkit-text-stroke:0.2px #333">328</div>
<div class="t" style="left:213.39999999999998px;width:200px;text-align:right;top:295.6px;font-size:10.3px;color:#2a2a2a;font-weight:normal;letter-spacing:-0.4px;-webkit-text-stroke:0.2px #333">358967</div>
<div class="t" style="left:-106.7px;width:200px;text-align:right;top:310.25000000000006px;font-size:10.3px;color:#2a2a2a;font-weight:normal;letter-spacing:-0.4px;-webkit-text-stroke:0.2px #333">2024</div>
<div class="t" style="left:97.3px;top:310.25000000000006px;font-size:10.3px;color:#2a2a2a;font-weight:normal;-webkit-text-stroke:0.2px #333">Январь</div>
<div class="t" style="left:5.599999999999994px;width:200px;text-align:right;top:310.25000000000006px;font-size:10.3px;color:#2a2a2a;font-weight:normal;letter-spacing:-0.4px;-webkit-text-stroke:0.2px #333">2300</div>
<div class="t" style="left:81.0px;width:200px;text-align:right;top:310.25000000000006px;font-size:10.3px;color:#2a2a2a;font-weight:normal;letter-spacing:-0.4px;-webkit-text-stroke:0.2px #333">1995</div>
<div class="t" style="left:143.8px;width:200px;text-align:right;top:310.25000000000006px;font-size:10.3px;color:#2a2a2a;font-weight:normal;letter-spacing:-0.4px;-webkit-text-stroke:0.2px #333">107</div>
<div class="t" style="left:213.39999999999998px;width:200px;text-align:right;top:310.25000000000006px;font-size:10.3px;color:#2a2a2a;font-weight:normal;letter-spacing:-0.4px;-webkit-text-stroke:0.2px #333">110208</div>
<div class="t" style="left:97.3px;top:324.90000000000003px;font-size:10.3px;color:#2a2a2a;font-weight:normal;-webkit-text-stroke:0.2px #333">Февраль</div>
<div class="t" style="left:5.599999999999994px;width:200px;text-align:right;top:324.90000000000003px;font-size:10.3px;color:#2a2a2a;font-weight:normal;letter-spacing:-0.4px;-webkit-text-stroke:0.2px #333">1250</div>
<div class="t" style="left:81.0px;width:200px;text-align:right;top:324.90000000000003px;font-size:10.3px;color:#2a2a2a;font-weight:normal;letter-spacing:-0.4px;-webkit-text-stroke:0.2px #333">2866</div>
<div class="t" style="left:143.8px;width:200px;text-align:right;top:324.90000000000003px;font-size:10.3px;color:#2a2a2a;font-weight:normal;letter-spacing:-0.4px;-webkit-text-stroke:0.2px #333">210</div>
<div class="t" style="left:213.39999999999998px;width:200px;text-align:right;top:324.90000000000003px;font-size:10.3px;color:#2a2a2a;font-weight:normal;letter-spacing:-0.4px;-webkit-text-stroke:0.2px #333">212123</div>
<div class="t" style="left:97.3px;top:339.55px;font-size:10.3px;color:#2a2a2a;font-weight:normal;-webkit-text-stroke:0.2px #333">Март</div>
<div class="t" style="left:5.599999999999994px;width:200px;text-align:right;top:339.55px;font-size:10.3px;color:#2a2a2a;font-weight:normal;letter-spacing:-0.4px;-webkit-text-stroke:0.2px #333">1200</div>
<div class="t" style="left:81.0px;width:200px;text-align:right;top:339.55px;font-size:10.3px;color:#2a2a2a;font-weight:normal;letter-spacing:-0.4px;-webkit-text-stroke:0.2px #333">3220</div>
<div class="t" style="left:143.8px;width:200px;text-align:right;top:339.55px;font-size:10.3px;color:#2a2a2a;font-weight:normal;letter-spacing:-0.4px;-webkit-text-stroke:0.2px #333">255</div>
<div class="t" style="left:213.39999999999998px;width:200px;text-align:right;top:339.55px;font-size:10.3px;color:#2a2a2a;font-weight:normal;letter-spacing:-0.4px;-webkit-text-stroke:0.2px #333">235485</div>
<div class="t" style="left:97.3px;top:354.2px;font-size:10.3px;color:#2a2a2a;font-weight:normal;-webkit-text-stroke:0.2px #333">Апрель</div>
<div class="t" style="left:5.599999999999994px;width:200px;text-align:right;top:354.2px;font-size:10.3px;color:#2a2a2a;font-weight:normal;letter-spacing:-0.4px;-webkit-text-stroke:0.2px #333">1400</div>
<div class="t" style="left:81.0px;width:200px;text-align:right;top:354.2px;font-size:10.3px;color:#2a2a2a;font-weight:normal;letter-spacing:-0.4px;-webkit-text-stroke:0.2px #333">3672</div>
<div class="t" style="left:143.8px;width:200px;text-align:right;top:354.2px;font-size:10.3px;color:#2a2a2a;font-weight:normal;letter-spacing:-0.4px;-webkit-text-stroke:0.2px #333">270</div>
<div class="t" style="left:213.39999999999998px;width:200px;text-align:right;top:354.2px;font-size:10.3px;color:#2a2a2a;font-weight:normal;letter-spacing:-0.4px;-webkit-text-stroke:0.2px #333">262052</div>
<div class="t" style="left:97.3px;top:368.85px;font-size:10.3px;color:#2a2a2a;font-weight:normal;-webkit-text-stroke:0.2px #333">Май</div>
<div class="t" style="left:5.599999999999994px;width:200px;text-align:right;top:368.85px;font-size:10.3px;color:#2a2a2a;font-weight:normal;letter-spacing:-0.4px;-webkit-text-stroke:0.2px #333">1350</div>
<div class="t" style="left:81.0px;width:200px;text-align:right;top:368.85px;font-size:10.3px;color:#2a2a2a;font-weight:normal;letter-spacing:-0.4px;-webkit-text-stroke:0.2px #333">4051</div>
<div class="t" style="left:143.8px;width:200px;text-align:right;top:368.85px;font-size:10.3px;color:#2a2a2a;font-weight:normal;letter-spacing:-0.4px;-webkit-text-stroke:0.2px #333">288</div>
<div class="t" style="left:213.39999999999998px;width:200px;text-align:right;top:368.85px;font-size:10.3px;color:#2a2a2a;font-weight:normal;letter-spacing:-0.4px;-webkit-text-stroke:0.2px #333">369159</div>
<div class="t" style="left:97.3px;top:383.5px;font-size:10.3px;color:#2a2a2a;font-weight:normal;-webkit-text-stroke:0.2px #333">Июнь</div>
<div class="t" style="left:5.599999999999994px;width:200px;text-align:right;top:383.5px;font-size:10.3px;color:#2a2a2a;font-weight:normal;letter-spacing:-0.4px;-webkit-text-stroke:0.2px #333">1100</div>
<div class="t" style="left:81.0px;width:200px;text-align:right;top:383.5px;font-size:10.3px;color:#2a2a2a;font-weight:normal;letter-spacing:-0.4px;-webkit-text-stroke:0.2px #333">3456</div>
<div class="t" style="left:143.8px;width:200px;text-align:right;top:383.5px;font-size:10.3px;color:#2a2a2a;font-weight:normal;letter-spacing:-0.4px;-webkit-text-stroke:0.2px #333">240</div>
<div class="t" style="left:213.39999999999998px;width:200px;text-align:right;top:383.5px;font-size:10.3px;color:#2a2a2a;font-weight:normal;letter-spacing:-0.4px;-webkit-text-stroke:0.2px #333">352156</div>
<div class="a" style="left:84.3px;top:119.7px;width:10px;height:10.2px;background:#fff;border:1px solid #dcdcdc"></div>
<svg class="a" style="left:86.8px;top:123.5px" width="5" height="3" viewBox="0 0 5 3"><path d="M0 0h5L2.5 3z" fill="#666"/></svg>
<div class="a" style="left:142.5px;top:119.7px;width:10px;height:10.2px;background:#fff;border:1px solid #dcdcdc"></div>
<svg class="a" style="left:145.0px;top:123.5px" width="5" height="3" viewBox="0 0 5 3"><path d="M0 0h5L2.5 3z" fill="#666"/></svg>
<div class="a" style="left:196.6px;top:119.7px;width:10px;height:10.2px;background:#fff;border:1px solid #dcdcdc"></div>
<svg class="a" style="left:199.1px;top:123.5px" width="5" height="3" viewBox="0 0 5 3"><path d="M0 0h5L2.5 3z" fill="#666"/></svg>
<div class="a" style="left:272.0px;top:119.7px;width:10px;height:10.2px;background:#fff;border:1px solid #dcdcdc"></div>
<svg class="a" style="left:274.5px;top:123.5px" width="5" height="3" viewBox="0 0 5 3"><path d="M0 0h5L2.5 3z" fill="#666"/></svg>
<div class="a" style="left:334.8px;top:119.7px;width:10px;height:10.2px;background:#fff;border:1px solid #dcdcdc"></div>
<svg class="a" style="left:337.3px;top:123.5px" width="5" height="3" viewBox="0 0 5 3"><path d="M0 0h5L2.5 3z" fill="#666"/></svg>
<div class="a" style="left:404.4px;top:119.7px;width:10px;height:10.2px;background:#fff;border:1px solid #dcdcdc"></div>
<svg class="a" style="left:406.9px;top:123.5px" width="5" height="3" viewBox="0 0 5 3"><path d="M0 0h5L2.5 3z" fill="#666"/></svg>
<div class="a" style="left:94.8px;top:145.3px;width:252.0px;height:60.1px;border:1.5px solid #5f7b69"></div>
<div class="a" style="left:94.8px;top:321.1px;width:252.0px;height:60.1px;border:1.5px solid #5f7b69"></div>
<div class="a" style="left:163.8px;top:82px;width:118.8px;height:43.8px;background:#fff;border-radius:3px;box-shadow:0 1px 4px rgba(0,0,0,0.22)"></div>
<div class="t" style="left:178.2px;top:91.2px;font-size:7.7px;color:#4a4a4a;font-weight:normal;">Задать область печати</div>
<div class="t" style="left:178.2px;top:109px;font-size:7.7px;color:#4a4a4a;font-weight:normal;">Очистить область печати</div>
<div class="a" style="left:811.3px;top:102.0px;width:10.2px;height:304.5px;background:#e3e3e3;"></div>
<div class="a" style="left:812.2px;top:104px;width:8px;height:8.2px;background:#fff;"></div>
<div class="a" style="left:812.2px;top:113.5px;width:8.5px;height:235.5px;background:#f4f4f4;border:1px solid #e2e2e2"></div>
<div class="a" style="left:812.2px;top:388.8px;width:8px;height:6.6px;background:#fff;"></div>
<svg class="a" style="left:814px;top:106.5px" width="5" height="3" viewBox="0 0 5 3"><path d="M0 3L2.5 0 5 3z" fill="#aaa"/></svg>
<svg class="a" style="left:814px;top:390.5px" width="5" height="3" viewBox="0 0 5 3"><path d="M0 0L2.5 3 5 0z" fill="#aaa"/></svg>
<svg class="a" style="left:814px;top:228px" width="4" height="6" viewBox="0 0 4 6" fill="none" stroke="#cfcfcf" stroke-width="0.6"><path d="M0 0.5h4M0 2h4M0 3.5h4M0 5h4"/></svg>
<div class="a" style="left:25.5px;top:397.5px;width:795.9px;height:9px;background:#e3e3e3;"></div>
<div class="a" style="left:26.5px;top:398.3px;width:9.5px;height:7.6px;background:#fff;"></div>
<div class="a" style="left:38px;top:397.3px;width:742.6px;height:9px;background:#f4f4f4;border:1px solid #e2e2e2"></div>
<div class="a" style="left:803.7px;top:398.3px;width:6.2px;height:7.6px;background:#fff;"></div>
<svg class="a" style="left:30px;top:400px" width="3" height="5" viewBox="0 0 3 5"><path d="M3 0L0 2.5 3 5z" fill="#aaa"/></svg>
<svg class="a" style="left:805.5px;top:400px" width="3" height="5" viewBox="0 0 3 5"><path d="M0 0L3 2.5 0 5z" fill="#aaa"/></svg>
<svg class="a" style="left:404px;top:399.5px" width="10" height="4" viewBox="0 0 10 4" fill="none" stroke="#c8c8c8" stroke-width="0.8"><path d="M0.5 0v4M2.5 0v4M4.5 0v4M6.5 0v4M8.5 0v4"/></svg>
<div class="a" style="left:821.5px;top:85.4px;width:27px;height:321px;background:#f3f3f3;border-left:1px solid #dcdcdc"></div>
<svg class="a" style="left:830.5px;top:100.5px" width="11" height="10" viewBox="0 0 11 10" fill="none" stroke="#555" stroke-width="1"><rect x="0.6" y="0.6" width="9.8" height="8.8"/><rect x="2.3" y="2.6" width="6.4" height="4.8" fill="#888" stroke="none"/></svg>
<svg class="a" style="left:830.3px;top:128.8px" width="12" height="8.5" viewBox="0 0 12 8.5" fill="none" stroke="#9c9c9c" stroke-width="0.9"><rect x="0.5" y="0.5" width="11" height="7.5"/><path d="M0.5 2.5h11M0.5 5.2h11M4.2 0.5v7.5M7.8 0.5v7.5"/></svg>
<svg class="a" style="left:830.5px;top:153.5px" width="11" height="11" viewBox="0 0 11 11" fill="none" stroke="#9c9c9c" stroke-width="0.9"><path d="M4.5 3.8V0.6H0.6v5.2h3"/><circle cx="6.6" cy="6.6" r="3.5"/></svg>
<svg class="a" style="left:831px;top:179px" width="10" height="10" viewBox="0 0 10 10" fill="none" stroke="#9c9c9c" stroke-width="0.9"><rect x="0.5" y="0.5" width="9" height="9"/><path d="M0.5 8l3-3 2 2 1.5-1.5 2.5 2.5"/></svg>
<svg class="a" style="left:831px;top:207px" width="10" height="10" viewBox="0 0 10 10" fill="none" stroke="#9c9c9c" stroke-width="0.9"><rect x="0.5" y="6" width="2" height="3.5"/><rect x="3.8" y="3.5" width="2" height="6"/><rect x="7.2" y="0.5" width="2" height="9"/></svg>
<div class="t" style="left:736px;width:200px;text-align:center;top:233px;font-size:10px;color:#9c9c9c;font-weight:normal;">¶</div>
<svg class="a" style="left:831px;top:258px" width="10" height="12" viewBox="0 0 10 12" fill="none" stroke="#9c9c9c" stroke-width="0.9"><path d="M0.5 0.8h4.5M2.7 0.8v6"/><text x="4" y="7" font-size="6" font-family="Liberation Sans" fill="#9c9c9c" stroke="none">a</text><path d="M1.5 11 Q5 8 8.5 11"/></svg>
<svg class="a" style="left:831px;top:284.5px" width="10" height="11" viewBox="0 0 10 11" fill="none" stroke="#9c9c9c" stroke-width="0.9"><rect x="0.5" y="0.5" width="3" height="3"/><rect x="0.5" y="6.5" width="3" height="3.5"/><path d="M5.5 2h4v5M8 5.5l1.5 1.5 1-1.5M5.5 9h3"/></svg>
<svg class="a" style="left:830.5px;top:312px" width="12" height="11" viewBox="0 0 12 11" fill="none" stroke="#9c9c9c" stroke-width="0.9"><rect x="0.5" y="0.5" width="9" height="7"/><path d="M0.5 3h9M3.5 0.5v7M6.5 0.5v7"/><path d="M5.5 6h6l-2.3 2.5v2.5l-1.4-.8v-1.7z" fill="#888" stroke="#888"/></svg>
<div class="a" style="left:0px;top:406.5px;width:848.4px;height:17px;background:#f1f1f1;border-top:1px solid #d0d0d0"></div>
<div class="a" style="left:0px;top:423.5px;width:850px;height:1.5px;background:#3a3a3a;"></div>
<svg class="a" style="left:10.5px;top:412.5px" width="6" height="7" viewBox="0 0 6 7"><path d="M6 0L0 3.5 6 7z" fill="#999"/></svg>
<svg class="a" style="left:27.8px;top:412.5px" width="6" height="7" viewBox="0 0 6 7"><path d="M0 0L6 3.5 0 7z" fill="#999"/></svg>
<div class="a" style="left:46.2px;top:407px;width:1px;height:16.5px;background:#d8d8d8;"></div>
<svg class="a" style="left:55.3px;top:411.8px" width="8.4" height="8.4" viewBox="0 0 8.4 8.4" fill="none" stroke="#444" stroke-width="0.9"><path d="M4.2 0v8.4M0 4.2h8.4"/></svg>
<svg class="a" style="left:71px;top:411px" width="8" height="10" viewBox="0 0 8 10" fill="none" stroke="#8a8a8a" stroke-width="1"><path d="M0 1.5h8M0 3.8h8M0 6.1h8M0 8.4h8"/></svg>
<div class="a" style="left:88.5px;top:407px;width:1px;height:16.5px;background:#d8d8d8;"></div>
<div class="t" style="left:21.099999999999994px;width:200px;text-align:center;top:412.5px;font-size:7.68px;color:#aaa;font-weight:normal;">Товары с арт</div>
<div class="a" style="left:153.7px;top:407px;width:1px;height:16.5px;background:#d8d8d8;"></div>
<div class="t" style="left:92.75px;width:200px;text-align:center;top:412.5px;font-size:7.68px;color:#aaa;font-weight:normal;">Продажи по мес</div>
<div class="a" style="left:231.8px;top:407px;width:1px;height:16.5px;background:#d8d8d8;"></div>
<div class="a" style="left:231.8px;top:407px;width:37.19999999999999px;height:16.5px;background:#fff;border-top:2px solid #40865c"></div>
<div class="t" style="left:150.4px;width:200px;text-align:center;top:412.5px;font-size:7.74px;color:#333;font-weight:bold;">Лист2</div>
<div class="a" style="left:269px;top:407px;width:1px;height:16.5px;background:#d8d8d8;"></div>
<div class="t" style="left:188.0px;width:200px;text-align:center;top:412.5px;font-size:7.68px;color:#aaa;font-weight:normal;">Лист1</div>
<div class="a" style="left:307px;top:407px;width:1px;height:16.5px;background:#d8d8d8;"></div>
<div class="t" style="left:236.8px;width:200px;text-align:center;top:412.5px;font-size:7.68px;color:#aaa;font-weight:normal;">сотрудники</div>
<div class="a" style="left:366.6px;top:407px;width:1px;height:16.5px;background:#d8d8d8;"></div>
<div class="a" style="left:422.4px;top:407px;width:1px;height:16.5px;background:#d8d8d8;"></div>
<div class="t" style="left:432.5px;top:412.4px;font-size:7.65px;color:#555;font-weight:normal;">Среднее: 1663,6667</div>
<div class="t" style="left:512.9px;top:412.4px;font-size:7.65px;color:#555;font-weight:normal;">Количество: 32</div>
<div class="t" style="left:576.5px;top:412.4px;font-size:7.65px;color:#555;font-weight:normal;">Мин: 210</div>
<div class="t" style="left:617.6px;top:412.4px;font-size:7.65px;color:#555;font-weight:normal;">Макс: 4051</div>
<div class="t" style="left:665.9px;top:412.4px;font-size:7.65px;color:#555;font-weight:normal;">Сумма: 39928</div>
<div class="a" style="left:736px;top:416.2px;width:7px;height:1px;background:#555;"></div>
<div class="t" style="left:748.8px;top:412.4px;font-size:7.74px;color:#444;font-weight:bold;">Масштаб 110%</div>
<svg class="a" style="left:811px;top:412px" width="8" height="8" viewBox="0 0 8 8" fill="none" stroke="#555" stroke-width="0.9"><path d="M4 0v8M0 4h8"/></svg>
<svg class="a" style="left:0;top:0" width="850" height="425"><g stroke="#cf2340" stroke-width="4" stroke-linecap="round" stroke-linejoin="round" fill="none"><path d="M408.8 100L228.8 34M244.3 26.3L228.8 34L235.4 48.9"/><path d="M17 150.5L163 74.7M145.4 70.4L163 74.7L156.7 92.3"/><path d="M538.7 277.6L346 206M360 198.5L346 206L351.7 222"/></g></svg>
</body></html>
